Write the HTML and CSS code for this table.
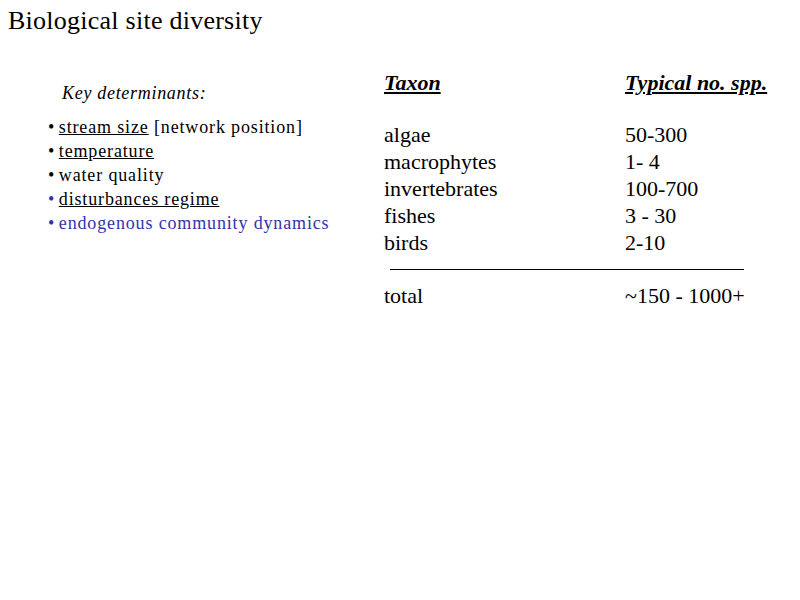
FILE: index.html
```html
<!DOCTYPE html>
<html>
<head>
<meta charset="utf-8">
<link rel="stylesheet" href="styles.css">
</head>
<body>
<h1 class="title">Biological site diversity</h1>
<div class="main">
  <div class="left">
    <p class="key">Key determinants:</p>
    <ul class="bullets">
      <li><span class="u">stream size</span> [network position]</li>
      <li><span class="u">temperature</span></li>
      <li>water quality</li>
      <li class="bluedot"><span class="u">disturbances regime</span></li>
      <li class="blue">endogenous community dynamics</li>
    </ul>
  </div>
  <div class="right">
    <div class="row head"><span class="c1">Taxon</span><span class="c2">Typical no. spp.</span></div>
    <div class="rows">
      <div class="row"><span class="c1">algae</span><span class="c2">50-300</span></div>
      <div class="row"><span class="c1">macrophytes</span><span class="c2">1- 4</span></div>
      <div class="row"><span class="c1">invertebrates</span><span class="c2">100-700</span></div>
      <div class="row"><span class="c1">fishes</span><span class="c2">3 - 30</span></div>
      <div class="row"><span class="c1">birds</span><span class="c2">2-10</span></div>
    </div>
    <div class="rule"></div>
    <div class="row"><span class="c1">total</span><span class="c2">~150 - 1000+</span></div>
  </div>
</div>
</body>
</html>
```
FILE: styles.css
```css
html, body {
  margin: 0;
  padding: 0;
  background: #fff;
  color: #000;
  font-family: "Liberation Serif", "Times New Roman", serif;
}
.title {
  margin: 0;
  padding: 7px 0 0 8px;
  font-size: 26px;
  font-weight: normal;
  line-height: 28px;
  letter-spacing: 0.25px;
}
.main {
  display: flex;
  padding-top: 41px;
}
.left {
  width: 384px;
  padding-left: 48px;
  box-sizing: border-box;
  padding-top: 5px;
}
.key {
  margin: 0 0 10px 14px;
  font-style: italic;
  font-size: 18px;
  line-height: 24px;
  letter-spacing: 0.7px;
}
.bullets {
  list-style: none;
  margin: 0;
  padding: 0;
  font-size: 18px;
  line-height: 24px;
  letter-spacing: 0.85px;
}
.bullets li::before {
  content: "\2022\00a0";
  letter-spacing: 0;
}
.u {
  text-decoration: underline;
}
.bluedot::before {
  color: #3333aa;
}
.blue {
  color: #3333aa;
}
.right {
  font-size: 22px;
  line-height: 27px;
  width: 400px;
  margin-top: -1px;
}
.row {
  display: flex;
}
.c1 {
  width: 241px;
}
.head {
  font-weight: bold;
  font-style: italic;
  font-size: 22px;
  text-decoration: underline;
  margin-top: -6px;
  margin-bottom: 25px;
}
.rule {
  width: 354px;
  margin: 13px 0 12px 6px;
  border-top: 1px solid #000;
}
```
